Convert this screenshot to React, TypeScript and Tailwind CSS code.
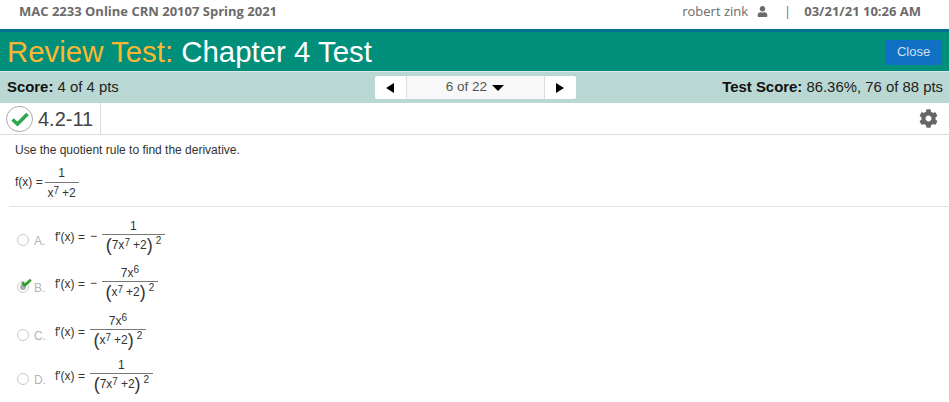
import { FaUser, FaCog } from "react-icons/fa";

function Denominator({ base }: { base: string }) {
  return (
    <span className="flex items-center justify-center whitespace-nowrap text-[12px] leading-none text-[#333]">
      <span className="text-[18px] font-light leading-none">(</span>
      <span>{base}</span>
      <sup className="relative top-[-2px] text-[10px] leading-none">7</sup>
      <span className="ml-[3px]">+2</span>
      <span className="text-[18px] font-light leading-none">)</span>
      <sup className="relative top-[-4px] ml-[3px] text-[10px] leading-none">2</sup>
    </span>
  );
}

function Fraction({ top, base, width }: { top: "one" | "seven"; base: string; width: string }) {
  return (
    <span className={`flex flex-col items-center ${width}`}>
      <span className="flex h-[15px] items-end pb-[2px] text-[12px] leading-none text-[#333]">
        {top === "one" ? (
          "1"
        ) : (
          <>
            7x<sup className="relative top-[-4px] text-[10px] leading-none">6</sup>
          </>
        )}
      </span>
      <span className="h-px w-full bg-[#777]" />
      <span className="flex h-[20px] items-center">
        <Denominator base={base} />
      </span>
    </span>
  );
}

function Option({
  letter,
  negative,
  top,
  base,
  width,
  rowHeight,
  picked,
}: {
  letter: string;
  negative?: boolean;
  top: "one" | "seven";
  base: string;
  width: string;
  rowHeight: string;
  picked?: boolean;
}) {
  return (
    <div className={`flex items-center ${rowHeight}`}>
      <span className="relative ml-[17px] mt-[6px] h-[12px] w-[12px] rounded-full border border-[#c9c9c9] bg-white">
        {picked && (
          <>
            <span className="absolute left-[2px] top-[2px] h-[6px] w-[6px] rounded-full bg-[#aaa]" />
            <svg viewBox="0 0 14 11" className="absolute left-[3px] top-[-4px] h-[9px] w-[11px]">
              <path d="M1.5 5.5 L5 9 L12.5 2" fill="none" stroke="#2f9e2f" strokeWidth="3.4" />
            </svg>
          </>
        )}
      </span>
      <span className="ml-[5px] mt-[8px] w-[21px] text-[12px] text-[#b4b4b4]">{letter}.</span>
      <span className="mb-[1px] whitespace-nowrap text-[12px] text-[#333]">f′(x) =</span>
      {negative && <span className="ml-[5px] mb-[2px] text-[12px] text-[#333]">−</span>}
      <span className={negative ? "ml-[5px]" : "ml-[5px]"}>
        <Fraction top={top} base={base} width={width} />
      </span>
    </div>
  );
}

export default function App() {
  return (
    <div className="h-[402px] w-[949px] overflow-hidden bg-white font-['Liberation_Sans',sans-serif]">
      <div className="flex h-[29px] items-center justify-between pb-[6px] pl-[19px] pr-[28px] font-['Open_Sans',sans-serif] text-[13px] text-[#6b6b6b]">
        <span className="font-bold">MAC 2233 Online CRN 20107 Spring 2021</span>
        <span className="flex items-center">
          <span>robert zink</span>
          <FaUser className="ml-[9px] text-[11px] text-[#6b6b6b]" />
          <span className="ml-[16px]">|</span>
          <span className="ml-[13px] font-bold">03/21/21 10:26 AM</span>
        </span>
      </div>

      <div className="flex h-[42px] items-center justify-between border-t-[3px] border-[#00708f] bg-[#008f7b] pl-[7px] pr-[7px]">
        <h1 className="text-[29.4px] leading-none text-white">
          <span className="text-[#fbb731]">Review Test:</span> Chapter 4 Test
        </h1>
        <button className="mt-[1px] h-[25px] w-[57px] rounded-[2px] bg-[#0f70c4] text-[13px] text-[#cfe0f0]">Close</button>
      </div>

      <div className="grid h-[32px] grid-cols-[1fr_auto_1fr] items-center border-t border-[#d5e8e4] bg-[#bad8d3] pl-[7px] pr-[6px] text-[14.9px] text-[#222]">
        <span>
          <b className="text-[#111]">Score:</b> 4 of 4 pts
        </span>
        <div className="flex h-[23px] w-[201px] rounded-[2px] bg-white text-[#555]">
          <span className="flex w-[32px] items-center justify-center border-r border-[#ddd]">
            <span className="h-0 w-0 border-y-[5px] border-r-[8px] border-y-transparent border-r-black" />
          </span>
          <span className="flex flex-1 items-center justify-center gap-[5px] bg-[#f8f8f8] text-[13.5px]">
            6 of 22
            <span className="h-0 w-0 border-x-[6px] border-t-[6px] border-x-transparent border-t-black" />
          </span>
          <span className="flex w-[32px] items-center justify-center border-l border-[#ddd]">
            <span className="h-0 w-0 border-y-[5px] border-l-[8px] border-y-transparent border-l-black" />
          </span>
        </div>
        <span className="text-right">
          <b className="text-[#111]">Test Score:</b> 86.36%, 76 of 88 pts
        </span>
      </div>

      <div className="flex h-[32px] items-center justify-between border-b border-[#d5dde0] pr-[11px]">
        <div className="flex h-full items-center border-r border-[#d5dde0] pl-[6px] pr-[7px]">
          <span className="flex h-[26px] w-[27px] items-center justify-center rounded-full border border-[#aaa] bg-white">
            <svg viewBox="0 0 20 16" className="h-[16px] w-[20px]">
              <path d="M2.5 8.5 L7.5 13 L17.5 3" fill="none" stroke="#2ea84a" strokeWidth="3.6" />
            </svg>
          </span>
          <span className="ml-[5px] text-[20px] text-[#444]">4.2-11</span>
        </div>
        <FaCog className="text-[19px] text-[#666]" />
      </div>

      <p className="ml-[15px] mt-[8px] text-[12px] leading-[14px] text-[#333]">Use the quotient rule to find the derivative.</p>

      <div className="ml-[15px] mr-[8px] mt-[7px] flex h-[37px] items-center">
        <span className="mb-[1px] text-[12px] text-[#333]">f(x) =</span>
        <span className="ml-[2px] flex w-[34px] flex-col items-center text-[12px] leading-none text-[#333]">
          <span className="pb-[3px]">1</span>
          <span className="h-px w-full bg-[#777]" />
          <span className="mt-[4px] flex">
            x<sup className="relative top-[-1px] text-[10px] leading-none">7</sup>
            <span className="ml-[3px]">+2</span>
          </span>
        </span>
      </div>

      <div className="ml-[9px] mt-[5px] h-px bg-[#e3e3e6]" />

      <div className="mt-[7px]">
        <Option letter="A" negative top="one" base="7x" width="w-[63px]" rowHeight="h-[46px]" />
        <Option letter="B" negative top="seven" base="x" width="w-[56px]" rowHeight="h-[48px]" picked />
        <Option letter="C" top="seven" base="x" width="w-[56px]" rowHeight="h-[48px]" />
        <Option letter="D" top="one" base="7x" width="w-[63px]" rowHeight="h-[40px]" />
      </div>
    </div>
  );
}
